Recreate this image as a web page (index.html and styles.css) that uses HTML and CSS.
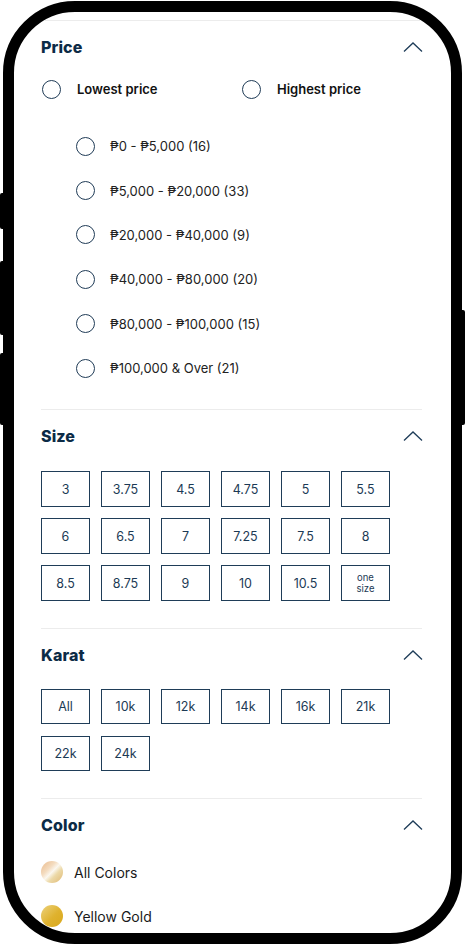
FILE: index.html
```html
<!DOCTYPE html>
<html>
<head>
<meta charset="utf-8">
<link rel="stylesheet" href="styles.css">
</head>
<body>
<div class="phone">
  <span class="btn btn-l1"></span>
  <span class="btn btn-l2"></span>
  <span class="btn btn-l3"></span>
  <span class="btn btn-r1"></span>
  <div class="screen">
    <section class="sec sec-price">
      <div class="head"><h2>Price</h2><svg class="chev" viewBox="0 0 20 10" width="20" height="10"><polyline points="1,9.5 10,1 19,9.5"/></svg></div>
      <div class="sort">
        <label class="sort-item"><span class="radio"></span><span>Lowest price</span></label>
        <label class="sort-item"><span class="radio"></span><span>Highest price</span></label>
      </div>
      <ul class="ranges">
        <li><span class="radio"></span><span>₱0 - ₱5,000 (16)</span></li>
        <li><span class="radio"></span><span>₱5,000 - ₱20,000 (33)</span></li>
        <li><span class="radio"></span><span>₱20,000 - ₱40,000 (9)</span></li>
        <li><span class="radio"></span><span>₱40,000 - ₱80,000 (20)</span></li>
        <li><span class="radio"></span><span>₱80,000 - ₱100,000 (15)</span></li>
        <li><span class="radio"></span><span>₱100,000 &amp; Over (21)</span></li>
      </ul>
    </section>
    <section class="sec sec-size">
      <div class="head"><h2>Size</h2><svg class="chev" viewBox="0 0 20 10" width="20" height="10"><polyline points="1,9.5 10,1 19,9.5"/></svg></div>
      <div class="grid">
        <div class="box">3</div><div class="box">3.75</div><div class="box">4.5</div><div class="box">4.75</div><div class="box">5</div><div class="box">5.5</div>
        <div class="box">6</div><div class="box">6.5</div><div class="box">7</div><div class="box">7.25</div><div class="box">7.5</div><div class="box">8</div>
        <div class="box">8.5</div><div class="box">8.75</div><div class="box">9</div><div class="box">10</div><div class="box">10.5</div><div class="box small">one<br>size</div>
      </div>
    </section>
    <section class="sec sec-karat">
      <div class="head"><h2>Karat</h2><svg class="chev" viewBox="0 0 20 10" width="20" height="10"><polyline points="1,9.5 10,1 19,9.5"/></svg></div>
      <div class="grid">
        <div class="box">All</div><div class="box">10k</div><div class="box">12k</div><div class="box">14k</div><div class="box">16k</div><div class="box">21k</div>
        <div class="box">22k</div><div class="box">24k</div>
      </div>
    </section>
    <section class="sec sec-color">
      <div class="head"><h2>Color</h2><svg class="chev" viewBox="0 0 20 10" width="20" height="10"><polyline points="1,9.5 10,1 19,9.5"/></svg></div>
      <ul class="colors">
        <li><span class="swatch sw-all"></span><span>All Colors</span></li>
        <li><span class="swatch sw-yellow"></span><span>Yellow Gold</span></li>
      </ul>
    </section>
  </div>
</div>
</body>
</html>
```

FILE: styles.css
```css
* { box-sizing: border-box; }
html, body { margin: 0; padding: 0; background: #fff; }
body {
  width: 466px;
  height: 945px;
  overflow: hidden;
  font-family: "Inter", "Noto Sans", sans-serif;
  color: #1a1a1a;
}
.phone {
  position: relative;
  margin: 1px 0 0 3px;
  width: 459px;
  height: 943px;
  border: 11px solid #000;
  border-radius: 72px;
  background: #fff;
}
.btn {
  position: absolute;
  width: 6px;
  background: #000;
  border-radius: 2px;
}
.btn-l1 { left: -14px; top: 181px; height: 36px; }
.btn-l2 { left: -14px; top: 249px; height: 74px; }
.btn-l3 { left: -14px; top: 341px; height: 72px; }
.btn-r1 { right: -14px; top: 298px; height: 115px; }
.screen {
  height: 100%;
  border-radius: 61px;
  overflow: hidden;
  padding: 8px 29px 0 27px;
}
.sec {
  border-top: 1px solid #ececec;
  padding-top: 15px;
}
.head {
  height: 22px;
  display: flex;
  align-items: center;
  justify-content: space-between;
}
.head h2 {
  margin: 0;
  font-size: 16px;
  font-weight: 800;
  color: #0c2b46;
  letter-spacing: 0.1px;
}
.chev {
  display: block;
  fill: none;
  stroke: #1f3d59;
  stroke-width: 1.3;
  margin-right: -1px;
}
.radio {
  display: inline-block;
  width: 19px;
  height: 19px;
  border-radius: 50%;
  border: 1.8px solid #1f3b56;
  flex: none;
}
.sort {
  display: flex;
  margin-top: 21px;
  height: 20px;
  align-items: center;
}
.sort-item {
  flex: none;
  display: flex;
  align-items: center;
  gap: 16px;
  width: 200px;
  padding-left: 1px;
  font-size: 13px;
  font-weight: 600;
  color: #111;
}
.ranges {
  list-style: none;
  margin: 25px 0 0;
  padding: 0 0 19px 35px;
}
.ranges li {
  height: 44.4px;
  display: flex;
  align-items: center;
  gap: 15px;
  font-size: 13px;
  color: #222;
}
.grid {
  display: grid;
  grid-template-columns: repeat(6, 49px);
  grid-auto-rows: 35.5px;
  column-gap: 11px;
  row-gap: 11.5px;
  padding-bottom: 27px;
}
.sec-size .grid { margin-top: 24px; }
.sec-karat .grid { margin-top: 23px; }
.box {
  border: 1.5px solid #1f3d58;
  display: flex;
  align-items: center;
  justify-content: center;
  text-align: center;
  font-size: 12.5px;
  color: #1c3a55;
}
.box.small {
  font-size: 9.5px;
  line-height: 11px;
}
.colors {
  list-style: none;
  margin: 14px 0 0;
  padding: 0;
}
.colors li {
  height: 44px;
  display: flex;
  align-items: center;
  gap: 11px;
  font-size: 14px;
  color: #1a1a1a;
}
.swatch {
  display: inline-block;
  width: 22px;
  height: 22px;
  border-radius: 50%;
  flex: none;
}
.sw-all {
  background: linear-gradient(135deg, #e9b98a 0%, #f4dcc0 35%, #fbf7ef 50%, #ecd9a8 65%, #e0b872 100%);
}
.sw-yellow {
  background: linear-gradient(135deg, #ecd27e 0%, #dfb22e 55%, #d9a81c 100%);
}
```
